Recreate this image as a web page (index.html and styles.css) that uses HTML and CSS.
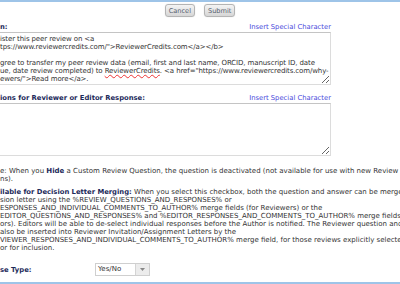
FILE: index.html
```html
<!DOCTYPE html>
<html>
<head>
<meta charset="utf-8">
<link rel="stylesheet" href="styles.css">
</head>
<body>
<div class="page">
  <div class="buttons">
    <button class="btn">Cancel</button>
    <button class="btn">Submit</button>
  </div>

  <div class="label-row first">
    <span class="label">n:</span>
    <a class="special" href="#">Insert Special Character</a>
  </div>
  <div class="textbox tall">ister this peer review on &lt;a<br>tps://www.reviewercredits.com/"&gt;ReviewerCredits.com&lt;/a&gt;&lt;/b&gt;<br><br>gree to transfer my peer review data (email, first and last name, ORCID, manuscript ID, date<br>ue, date review completed) to <span class="spell">ReviewerCredits</span>. &lt;a href="https://www.reviewercredits.com/why-<br>ewers/"&gt;Read more&lt;/a&gt;.</div>

  <div class="label-row second">
    <span class="label">ions for Reviewer or Editor Response:</span>
    <a class="special" href="#">Insert Special Character</a>
  </div>
  <div class="textbox tall"></div>

  <p class="note">e: When you <b>Hide</b> a Custom Review Question, the question is deactivated (not available for use with new Review or Editor<br>ns).</p>

  <p class="note merge"><b class="label">ilable for Decision Letter Merging:</b> When you select this checkbox, both the question and answer can be merged into<br>sion letter using the %REVIEW_QUESTIONS_AND_RESPONSES% or<br>ESPONSES_AND_INDIVIDUAL_COMMENTS_TO_AUTHOR% merge fields (for Reviewers) or the<br>EDITOR_QUESTIONS_AND_RESPONSES% and %EDITOR_RESPONSES_AND_COMMENTS_TO_AUTHOR% merge fields (for<br>ors). Editors will be able to de-select individual responses before the Author is notified. The Reviewer question and answer<br>also be inserted into Reviewer Invitation/Assignment Letters by the<br>VIEWER_RESPONSES_AND_INDIVIDUAL_COMMENTS_TO_AUTHOR% merge field, for those reviews explicitly selected<br>or for inclusion.</p>

  <div class="type-row">
    <span class="label type-label">se Type:</span>
    <div class="select">
      <span class="select-value">Yes/No</span>
      <span class="select-arrow"><svg width="5" height="3" viewBox="0 0 5 3"><path d="M0 0h5L2.5 3z" fill="#888"/></svg></span>
    </div>
  </div>
</div>
</body>
</html>
```

FILE: styles.css
```css
html, body {
  margin: 0;
  padding: 0;
  background: #fff;
}
body {
  width: 400px;
  height: 284px;
  overflow: hidden;
  font-family: "DejaVu Sans", Verdana, sans-serif;
  font-size: 7px;
  line-height: 8px;
  color: #333;
}
.page {
  box-sizing: border-box;
  height: 284px;
  border-top: 2px solid #9ec4e8;
  border-bottom: 2px solid #9ec4e8;
  display: flex;
  flex-direction: column;
  white-space: nowrap;
  overflow: hidden;
}
.buttons {
  display: flex;
  justify-content: center;
  gap: 9px;
  margin-top: 2px;
}
.btn {
  height: 13px;
  padding: 0 3px;
  font-family: inherit;
  font-size: 6.6px;
  color: #555e6e;
  border: 1px solid #b4b4b4;
  border-radius: 3px;
  background: linear-gradient(#f4f4f4, #d6d6d6);
  box-shadow: 0 0 1px #ccc;
}
.label-row {
  display: flex;
  justify-content: space-between;
  width: 331px;
}
.label-row.first { margin-top: 6px; }
.label-row.second { margin-top: 9px; }
.label {
  font-weight: bold;
  font-size: 6.8px;
  color: #1c2a5a;
}
.special {
  font-size: 6.8px;
  color: #4b4bdc;
  text-decoration: none;
}
.textbox {
  box-sizing: border-box;
  margin-left: -4px;
  width: 335px;
  padding: 2px 0 0 3px;
  border: 1px solid #dcdcdc;
  border-top-color: #c4c4c4;
  background: #fff;
  color: #333;
  letter-spacing: -0.11px;
  overflow: hidden;
  resize: both;
}
.textbox.tall { height: 53px; margin-top: 1px; }
.spell {
  text-decoration: underline wavy #e33;
  text-decoration-thickness: 1px;
}
.note {
  margin: 11px 0 0 0;
}
.note.merge {
  margin-top: 5px;
}
.note b { color: #1c2a5a; }
.type-row {
  display: flex;
  align-items: center;
  margin-top: 11px;
}
.type-label {
  width: 95px;
}
.select {
  display: flex;
  height: 13px;
  width: 55px;
  box-sizing: border-box;
  border: 1px solid #cfcfcf;
  background: #fff;
}
.select-value {
  flex: 1;
  padding-left: 2px;
  line-height: 11px;
  color: #333;
}
.select-arrow {
  width: 13px;
  display: flex;
  align-items: center;
  justify-content: center;
  background: #ececec;
  border-left: 1px solid #d4d4d4;
}
```
